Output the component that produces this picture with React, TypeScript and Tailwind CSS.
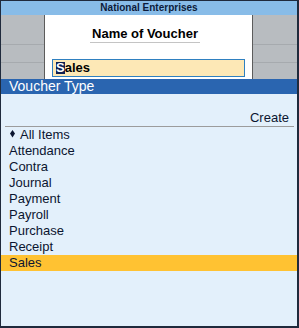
const items = ["Attendance", "Contra", "Journal", "Payment", "Payroll", "Purchase", "Receipt", "Sales"]

const GrayColumn = ({ className }: { className: string }) => (
    <div className={`${className} h-full bg-[#b8bcc0] pt-[29px]`}>
        <div className="h-[19px] border-t border-b border-[#a6aaae]" />
    </div>
)

const App = () => {
    const selected = "Sales"
    return (
        <div
            className="w-[299px] h-[328px] flex flex-col border-l border-t border-r-2 border-b-2 border-[#1f2a3c] overflow-hidden"
            style={{ fontFamily: '"Liberation Sans", Arial, sans-serif' }}
        >
            {/* company bar */}
            <div className="h-[14px] shrink-0 bg-[#88bce8] text-center text-[10px] leading-[14px] font-bold text-[#0c1a3a]">
                National Enterprises
            </div>

            {/* voucher name panel */}
            <div className="h-[64px] shrink-0 flex">
                <GrayColumn className="w-[43px]" />
                <div className="w-[209px] h-full bg-white border-l border-r border-[#5c5c5c] flex flex-col">
                    <div className="pt-[11px] pl-[45px]">
                        <div className="w-[110px] border-b border-[#c4c4c4] text-center text-[13px] leading-[16px] font-bold text-black">
                            Name of Voucher
                        </div>
                    </div>
                    <div className="mx-[7px] mt-[16px] h-[18px] bg-[#fde8b6] border border-[#2f80c0] pl-[3px] text-[13px] leading-[16px] font-bold text-black">
                        <span className="inline-block h-[12px] leading-[12px] mt-[2px] align-top bg-[#0e1f52] text-white">S</span>
                        <span className="align-top">ales</span>
                    </div>
                </div>
                <GrayColumn className="flex-1" />
            </div>

            {/* list header */}
            <div className="h-[15px] shrink-0 bg-[#2a65b0] pl-[8px] text-[14px] leading-[15px] text-white">
                Voucher Type
            </div>

            {/* list */}
            <div className="flex-1 bg-[#e3f0fb] pt-[16px] text-[13px] leading-[16px] text-[#0b1530]">
                <div className="h-[16px] pr-[8px] text-right">Create</div>
                <div className="ml-[4px] mr-[3px] border-t border-[#9c9c9c]" />
                <div className="h-[16px] pl-[9px] flex items-center gap-[5px]">
                    <svg width="5" height="8" viewBox="0 0 5 8" className="shrink-0 -mt-[3px]">
                        <polygon points="2.5,0 5,3.5 2.5,7.5 0,3.5" fill="#0b1530" />
                    </svg>
                    <span>All Items</span>
                </div>
                {items.map((name) => (
                    <div
                        key={name}
                        className={name === selected ? "h-[16px] pl-[8px] bg-[#ffc232]" : "h-[16px] pl-[8px]"}
                    >
                        {name}
                    </div>
                ))}
            </div>
        </div>
    )
}

export default App
